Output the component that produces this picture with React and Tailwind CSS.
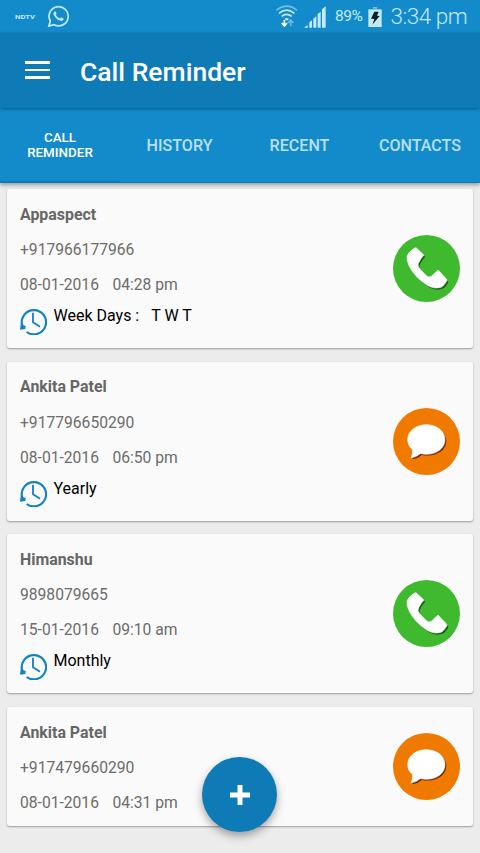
import React from "react";

const reminders = [
  { name: "Appaspect", phone: "+917966177966", date: "08-01-2016", time: "04:28 pm", repeat: "Week Days :", days: "T W T", type: "call" },
  { name: "Ankita Patel", phone: "+917796650290", date: "08-01-2016", time: "06:50 pm", repeat: "Yearly", type: "message" },
  { name: "Himanshu", phone: "9898079665", date: "15-01-2016", time: "09:10 am", repeat: "Monthly", type: "call" },
  { name: "Ankita Patel", phone: "+917479660290", date: "08-01-2016", time: "04:31 pm", type: "message" },
];

function CallIcon() {
  const handset =
    "M67 38 Q70 38 73 42 L92 60 Q82 71 76 84 Q72 92 79 100 L99 121 Q107 129 115 123 L133 106 Q136 105 139 109 L160 132 Q162 135 160 138 Q151 152 145 155 Q126 163 103 151 Q65 127 48 92 Q40 74 42 63 Q44 54 60 42 Z";
  return (
    <svg className="size-[67px]" viewBox="0 0 200 200">
      <circle cx="100" cy="100" r="100" fill="#3fba2f" />
      <path d={handset} fill="#155c12" transform="translate(4 5)" />
      <path d={handset} fill="#fff" stroke="#fff" strokeWidth="2" />
    </svg>
  );
}

function MessageIcon() {
  const bubble =
    "M99 50 C131 50 155 69 155 94 C155 120 131 138 99 138 Q90 138 82 136 Q70 147 54 149 Q60 138 58 124 C48 116 44 105 44 94 C44 69 68 50 99 50 Z";
  return (
    <svg className="size-[67px]" viewBox="0 0 200 200">
      <circle cx="100" cy="100" r="100" fill="#f07a00" />
      <path d={bubble} fill="#6f2408" transform="translate(4 4)" />
      <path d={bubble} fill="#fff" stroke="#fff" strokeWidth="2" />
    </svg>
  );
}

function ClockIcon() {
  return (
    <svg className="h-[27px] w-[27px] shrink-0" viewBox="0 0 81 81" fill="none" stroke="#1382c2" strokeWidth="6.5">
      <path d="M7 54 A36.5 36.5 0 1 1 20 72" />
      <path d="M39 14 V43 L60 56" strokeWidth="5.5" />
      <path d="M0 65 L2 49 L17 54 L16 63 Z" fill="#1382c2" stroke="none" />
    </svg>
  );
}

function Card({ item }) {
  return (
    <div className="flex items-center justify-between rounded-[3px] bg-[#fafafa] pr-[13px] pl-[13.4px] shadow-[0_1px_2px_rgba(0,0,0,0.35)]">
      <div className={item.repeat ? "h-[159px]" : "h-[119px]"}>
        <div className="pt-[15.5px] text-[15.9px] leading-5 font-bold text-[#666]">{item.name}</div>
        <div className="pt-[15.5px] text-[15.65px] leading-5 text-[#6c6c6c]">{item.phone}</div>
        <div className="flex gap-[13.5px] pt-[15px] text-[15.65px] leading-5 text-[#6c6c6c]">
          <span>{item.date}</span>
          <span>{item.time}</span>
        </div>
        {item.repeat && (
          <div className="flex gap-[6.5px] pt-[12.5px]">
            <ClockIcon />
            <div className="-mt-[1.5px] flex gap-[12px] text-[16px] leading-5 text-black">
              <span>{item.repeat}</span>
              {item.days && <span>{item.days}</span>}
            </div>
          </div>
        )}
      </div>
      {item.type === "call" ? <CallIcon /> : <MessageIcon />}
    </div>
  );
}

function StatusBar() {
  return (
    <div className="flex h-[33px] items-center bg-[#138bcb] text-[#c3eafa]">
      <span className="ml-[15px] w-[21px] origin-left scale-x-[1.28] text-[6px] leading-none font-bold">NDTV</span>
      <svg className="ml-[11px] size-[23px]" viewBox="0 0 24 24" fill="none" stroke="currentColor" strokeWidth="1.8">
        <path d="M2 22 L3.5 16.8 A10 10 0 1 1 7.3 20.5 Z" />
        <path d="M8 6.7 Q6.3 7.6 6.8 9.7 Q8.6 14.7 14 16.5 Q16.3 17 17.5 14.8 L17.2 14 L14.7 12.8 L13.5 14.3 Q10.8 13.2 9.2 10.5 L10 9.3 L9 6.8 Z" fill="currentColor" stroke="none" />
      </svg>
      <svg className="ml-[205px] h-[23px] w-[23px]" viewBox="0 0 69 69" fill="none" stroke="currentColor" strokeWidth="5">
        <path d="M4 16 Q35 -9 66 16" opacity=".55" />
        <path d="M12 25 Q35 6 58 25" />
        <path d="M20 34 Q35 22 50 34" />
        <path d="M28 42 L35 47 L42 42 Q35 36 28 42Z" fill="currentColor" stroke="none" />
        <path d="M28 45 V61 M20 54 L28 63 L36 54" stroke="#fff" />
        <path d="M47 64 V47 M39 54 L47 45 L55 54" opacity=".5" />
      </svg>
      <svg className="ml-[6px] h-[22px] w-[22px]" viewBox="0 0 66 66" fill="currentColor">
        <path d="M0 65 L11 57 V65 Z M16 65 V49 L24 43 V65 Z M28 65 V38 L37 31 V65 Z M41 65 V24 L50 17 V65 Z M54 65 V10 L65 1 V65 Z" />
      </svg>
      <span className="ml-[9px] w-[29px] text-[15.5px] leading-none tracking-[-0.4px]">89%</span>
      <svg className="ml-[4px] h-[20px] w-[14px]" viewBox="0 0 42 60">
        <path d="M15 0 H28 V5 H15Z" fill="#72c0e5" />
        <path d="M1 7 H41 V60 H1Z" fill="#c3eafa" />
        <path d="M19 14 L32 14 L27 26 L35 27 L13 53 L19 36 L9 35 Z" fill="#08202d" />
      </svg>
      <span className="ml-[8.5px] text-[22.5px] leading-none font-light tracking-[-0.5px] whitespace-nowrap">3:34 pm</span>
    </div>
  );
}

export default function App() {
  return (
    <div className="relative flex h-[853px] w-[480px] flex-col overflow-hidden bg-[#ececec] font-[Roboto,sans-serif]">
      <StatusBar />
      <header className="z-10 flex h-[75px] items-center bg-[#0f7bb6] shadow-[0_1px_3px_rgba(0,40,80,0.5)]">
        <div className="mt-[-1px] ml-[25px] flex w-[25px] flex-col gap-[5px]">
          <i className="h-[2.5px] bg-white" />
          <i className="h-[2.5px] bg-white" />
          <i className="h-[2.5px] bg-white" />
        </div>
        <h1 className="mt-[3px] ml-[30px] text-[26.5px] leading-none font-medium text-white">Call Reminder</h1>
      </header>
      <nav className="grid h-[75px] shrink-0 grid-cols-4 items-center border-b border-[#0f7bb6] bg-[#138bcb] text-center text-[16.1px] font-medium text-[#b8e0f4] shadow-[0_2px_4px_rgba(0,0,0,0.35)]">
        <div className="flex h-full items-center justify-center border-b border-[#0f7bb6] pt-[1px] text-[13.4px] leading-[15px] text-white">
          <span>CALL<br />REMINDER</span>
        </div>
        <span className="pt-[2px] pr-px">HISTORY</span>
        <span className="pt-[2px] pr-px">RECENT</span>
        <span className="pt-[2px]">CONTACTS</span>
      </nav>
      <main className="flex flex-col gap-[13.6px] pt-[6.3px] pr-[7px] pl-[6.6px]">
        {reminders.map((item, i) => (
          <Card key={i} item={item} />
        ))}
      </main>
      <button className="absolute top-[757px] left-[202px] flex size-[75px] items-center justify-center rounded-full bg-[#0f7bb6] shadow-[0_4px_8px_rgba(0,0,0,0.35)]">
        <svg className="size-[20px]" viewBox="0 0 20 20" fill="none" stroke="#fff" strokeWidth="5">
          <path d="M10 0 V20 M0 10 H20" />
        </svg>
      </button>
    </div>
  );
}
